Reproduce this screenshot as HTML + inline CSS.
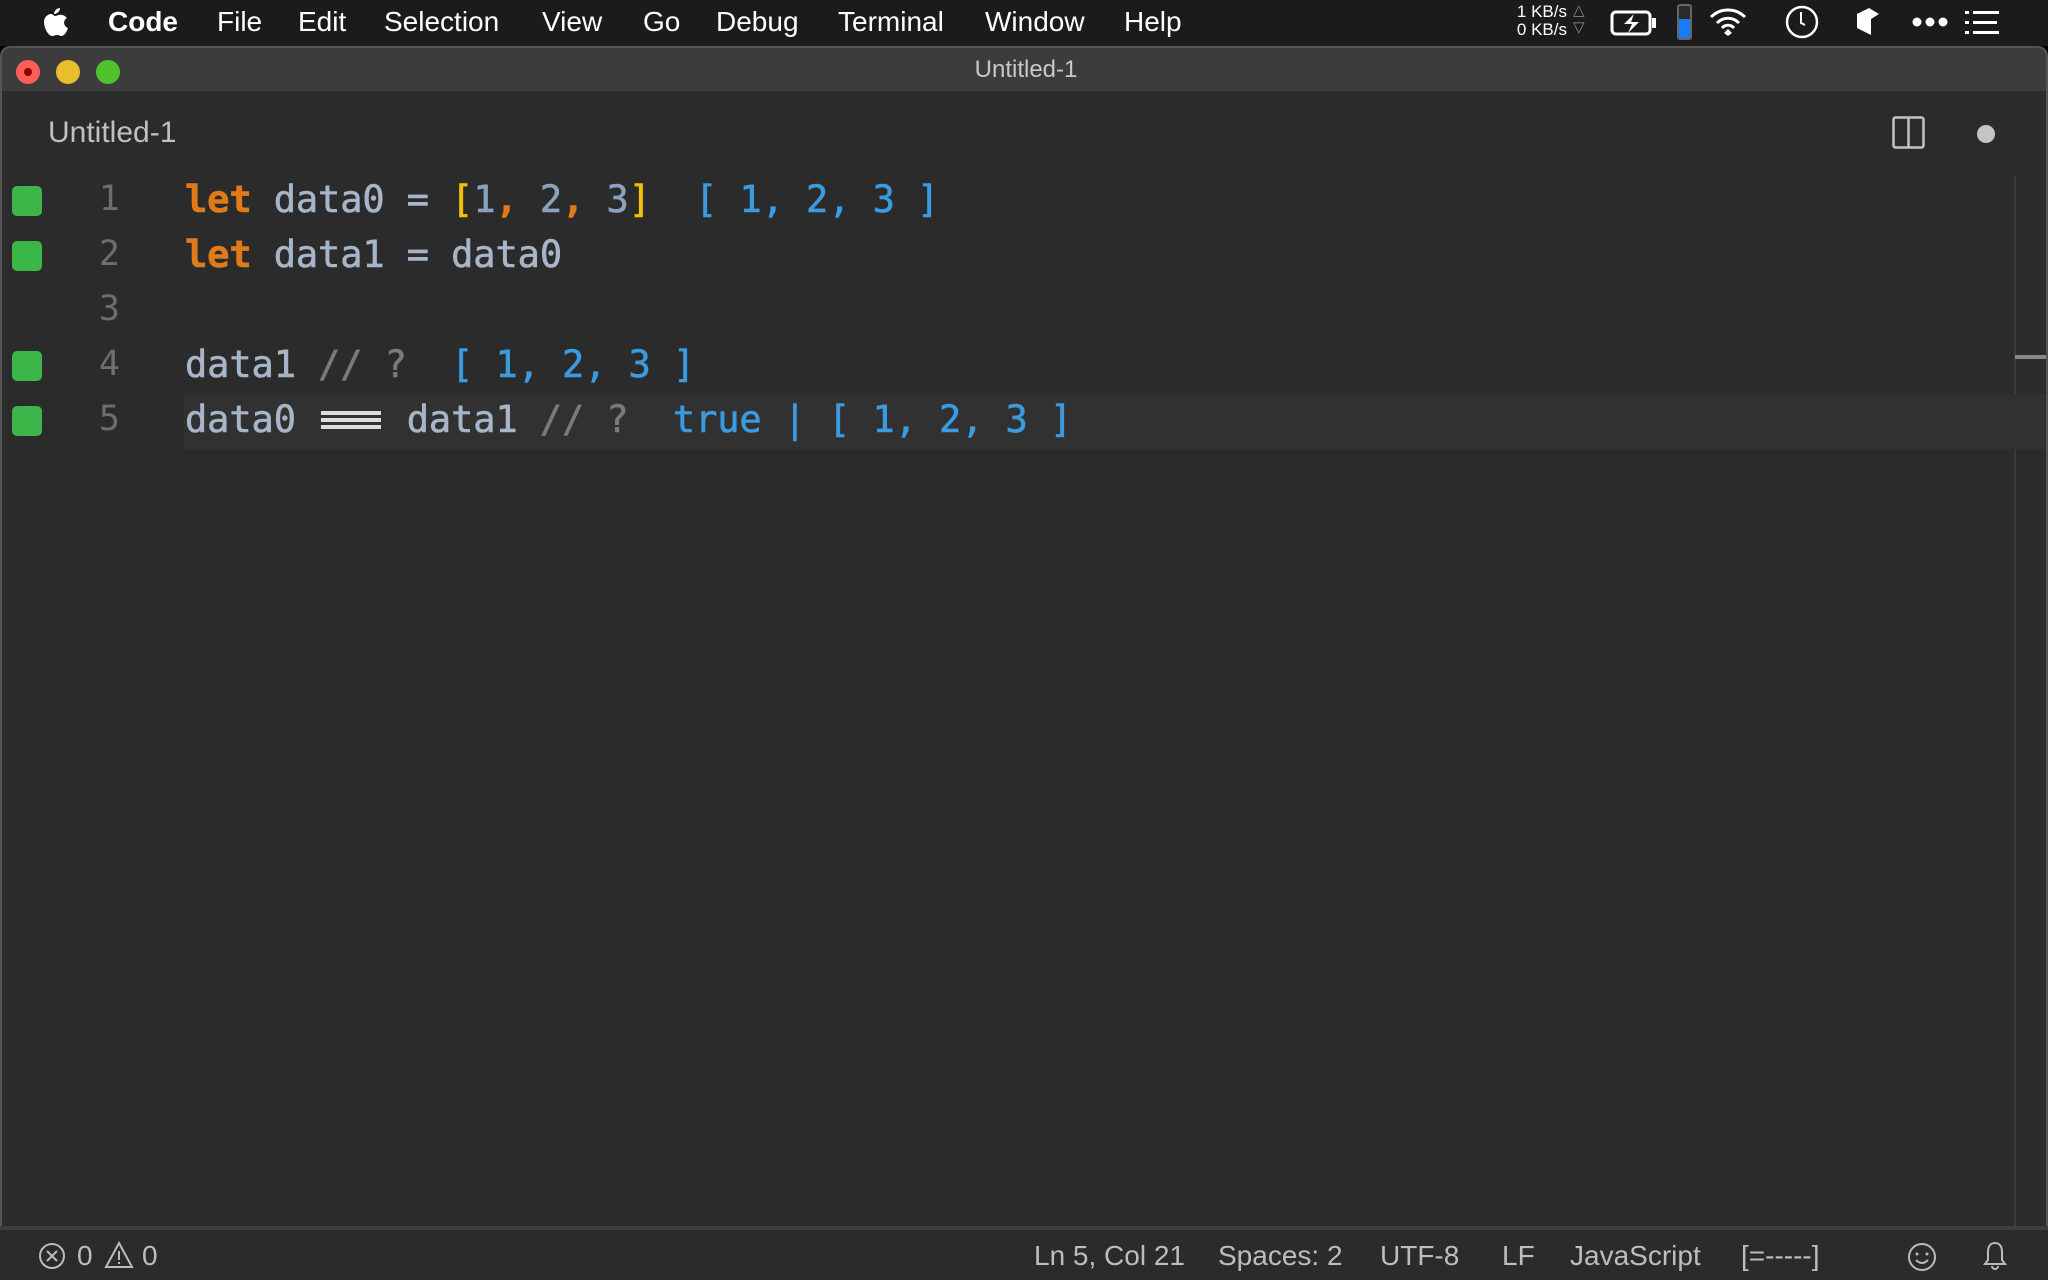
<!DOCTYPE html>
<html><head><meta charset="utf-8"><style>
*{margin:0;padding:0;box-sizing:border-box}
body{width:2048px;height:1280px;background:#000;overflow:hidden;position:relative;font-family:"Liberation Sans",sans-serif}
.abs{position:absolute}
#menu{left:0;top:0;width:2048px;height:46px;background:#1b1b1e;color:#fff;font-size:28px}
#menu span{position:absolute;top:6px}
#win{left:0;top:46px;width:2048px;height:1234px;background:#2b2b2b;border-radius:10px 10px 0 0;overflow:hidden;border:2px solid #555;border-bottom:none}
#title{left:0;top:0;width:2048px;height:43px;background:#3c3c3c;color:#c8c8c8;font-size:24px;text-align:center;line-height:43px}
.tl{position:absolute;top:12px;width:24px;height:24px;border-radius:50%}
.code{position:absolute;left:185px;font-family:"DejaVu Sans Mono","Liberation Mono",monospace;font-size:37px;white-space:pre;color:#a6b5c7;letter-spacing:-0.1px;line-height:55px;-webkit-text-stroke:0.6px}
.k{color:#e07b1c;font-weight:bold}.b{color:#3b9be0}.y{color:#f2c200}.c{color:#7a7a7a}.n{color:#8aa2bf}
.g{position:absolute;left:12px;width:30px;height:30px;background:#3cb648;border-radius:5px}
.ln{position:absolute;left:80px;width:40px;text-align:right;font-family:"DejaVu Sans Mono",monospace;font-size:35px;color:#6b6e72;line-height:55px}
#status{left:0;top:1226px;width:2048px;height:54px;background:#2b2b2b;border-top:4px solid #3e3e3e;color:#bdbdbd;font-size:28px}
#status span{position:absolute;top:10px}
</style></head><body>
<div id="menu" class="abs">
<svg class="abs" style="left:40px;top:6px" width="30" height="32" viewBox="0 0 30 32"><path d="M20 2c0 3-3 6-6 6 0-3 3-6 6-6zM15 10c2 0 4-2 7-1 2 0 4 2 5 3-4 2-4 8 1 10-1 3-3 7-6 8-2 0-3-1-5-1s-3 1-5 1c-3 0-8-7-8-14 0-5 4-8 7-8 2 0 3 2 4 2z" fill="#fff"/></svg>
<span style="left:108px;font-weight:bold">Code</span>
<span style="left:217px">File</span><span style="left:298px">Edit</span><span style="left:384px">Selection</span><span style="left:542px">View</span><span style="left:643px">Go</span><span style="left:716px">Debug</span><span style="left:838px">Terminal</span><span style="left:985px">Window</span><span style="left:1124px">Help</span>
<div class="abs" style="left:1505px;top:3px;font-size:17px;line-height:18px;text-align:right;width:62px">1 KB/s<br>0 KB/s</div>
<div class="abs" style="left:1573px;top:2px;font-size:15px;line-height:17px;color:#888">△<br>▽</div>
<svg class="abs" style="left:1610px;top:10px" width="50" height="26"><rect x="2" y="2" width="38" height="22" rx="4" fill="none" stroke="#fff" stroke-width="3"/><rect x="42" y="8" width="4" height="10" fill="#fff"/><path d="M24 4l-10 10h8l-4 9 11-11h-8z" fill="#fff"/></svg>
<div class="abs" style="left:1677px;top:4px;width:15px;height:36px;border:2px solid #666;border-radius:3px;background:linear-gradient(#2a2a2a 40%,#1a7cf5 40%)"></div>
<svg class="abs" style="left:1708px;top:6px" width="40" height="32"><path d="M3 11a24 24 0 0 1 34 0M9 17a15 15 0 0 1 22 0M14 22a8 8 0 0 1 12 0" stroke="#fff" stroke-width="3" fill="none"/><path d="M16 27l4-4 4 4-4 3z" fill="#fff"/></svg>
<svg class="abs" style="left:1784px;top:4px" width="36" height="36"><circle cx="18" cy="18" r="15" fill="none" stroke="#fff" stroke-width="2.5"/><path d="M17 8v11l4 2" stroke="#fff" stroke-width="2" fill="none"/></svg>
<svg class="abs" style="left:1855px;top:6px" width="26" height="32"><path d="M2 8l12-6 10 6-8 5v16l-14-7z" fill="#fff"/></svg>
<svg class="abs" style="left:1912px;top:16px" width="36" height="12"><circle cx="5" cy="6" r="4.5" fill="#fff"/><circle cx="18" cy="6" r="4.5" fill="#fff"/><circle cx="31" cy="6" r="4.5" fill="#fff"/></svg>
<svg class="abs" style="left:1965px;top:11px" width="34" height="24"><g fill="#fff"><rect x="0" y="0" width="4" height="3"/><rect x="8" y="0" width="26" height="3"/><rect x="0" y="10" width="4" height="3"/><rect x="8" y="10" width="24" height="3"/><rect x="0" y="20" width="4" height="3"/><rect x="8" y="20" width="26" height="3"/></g></svg>
</div>
<div id="win" class="abs">
<div id="title" class="abs">Untitled-1
<div class="tl" style="left:14px;background:#fd5f57"><div style="width:8px;height:8px;border-radius:50%;background:#8f0000;margin:8px"></div></div>
<div class="tl" style="left:54px;background:#e9bf2d"></div>
<div class="tl" style="left:94px;background:#4fc22c"></div>
</div>
<div class="abs" style="left:46px;top:68px;font-size:30px;color:#c0c0c0">Untitled-1</div>
<svg class="abs" style="left:1890px;top:68px" width="34" height="34"><rect x="1.5" y="1.5" width="30" height="30" rx="2" fill="none" stroke="#c4c4c4" stroke-width="2.5"/><line x1="16.5" y1="2" x2="16.5" y2="32" stroke="#c4c4c4" stroke-width="2.5"/></svg>
<div class="abs" style="left:1975px;top:77px;width:18px;height:18px;border-radius:50%;background:#c4c4c4"></div>
<div class="abs" style="left:2012px;top:128px;width:2px;height:1060px;background:#3a3a3a"></div>
<div class="abs" style="left:2013px;top:307px;width:33px;height:4px;background:#888"></div>
<div class="abs" style="left:182px;top:346px;width:1864px;height:55px;background:#313131"></div>
</div>
<div class="g" style="top:186px"></div><div class="g" style="top:241px"></div><div class="g" style="top:351px"></div><div class="g" style="top:406px"></div>
<div class="ln" style="top:172px">1</div><div class="ln" style="top:227px">2</div><div class="ln" style="top:282px">3</div><div class="ln" style="top:337px">4</div><div class="ln" style="top:392px">5</div>
<div class="code" style="top:172px"><span class="k">let</span> data0 = <span class="y">[</span><span class="n">1</span><span class="k">,</span> <span class="n">2</span><span class="k">,</span> <span class="n">3</span><span class="y">]</span>  <span class="b">[ 1, 2, 3 ]</span></div>
<div class="code" style="top:227px"><span class="k">let</span> data1 = data0</div>
<div class="code" style="top:337px">data1 <span class="c">// ?</span>  <span class="b">[ 1, 2, 3 ]</span></div>
<div class="code" style="top:392px">data0     data1 <span class="c">// ?</span>  <span class="b">true | [ 1, 2, 3 ]</span></div>
<div class="abs" style="left:321px;top:411px;width:60px;height:18px;background:linear-gradient(#ddd 0 4px,transparent 4px 7px,#ddd 7px 11px,transparent 11px 14px,#ddd 14px)"></div>
<div id="status" class="abs">
<svg class="abs" style="left:38px;top:12px" width="28" height="28"><circle cx="14" cy="14" r="12" fill="none" stroke="#bbb" stroke-width="2"/><path d="M9 9l10 10M19 9l-10 10" stroke="#bbb" stroke-width="2"/></svg>
<span style="left:77px">0</span>
<svg class="abs" style="left:104px;top:11px" width="30" height="28"><path d="M15 2l13 24H2z" fill="none" stroke="#bbb" stroke-width="2"/><path d="M15 10v9M15 21v2" stroke="#bbb" stroke-width="2"/></svg>
<span style="left:142px">0</span>
<span style="left:1034px">Ln 5, Col 21</span><span style="left:1218px">Spaces: 2</span><span style="left:1380px">UTF-8</span><span style="left:1502px">LF</span><span style="left:1570px">JavaScript</span><span style="left:1741px">[=-----]</span>
<svg class="abs" style="left:1907px;top:12px" width="30" height="30"><circle cx="15" cy="15" r="13" fill="none" stroke="#bbb" stroke-width="2"/><circle cx="10" cy="12" r="1.5" fill="#bbb"/><circle cx="20" cy="12" r="1.5" fill="#bbb"/><path d="M9 18q6 6 12 0" fill="none" stroke="#bbb" stroke-width="2"/></svg>
<svg class="abs" style="left:1982px;top:10px" width="26" height="32"><path d="M13 3c-5 0-7 4-7 9v8l-3 4h20l-3-4v-8c0-5-2-9-7-9zM10 26a3 3 0 0 0 6 0" fill="none" stroke="#bbb" stroke-width="2"/></svg>
</div>
</body></html>
